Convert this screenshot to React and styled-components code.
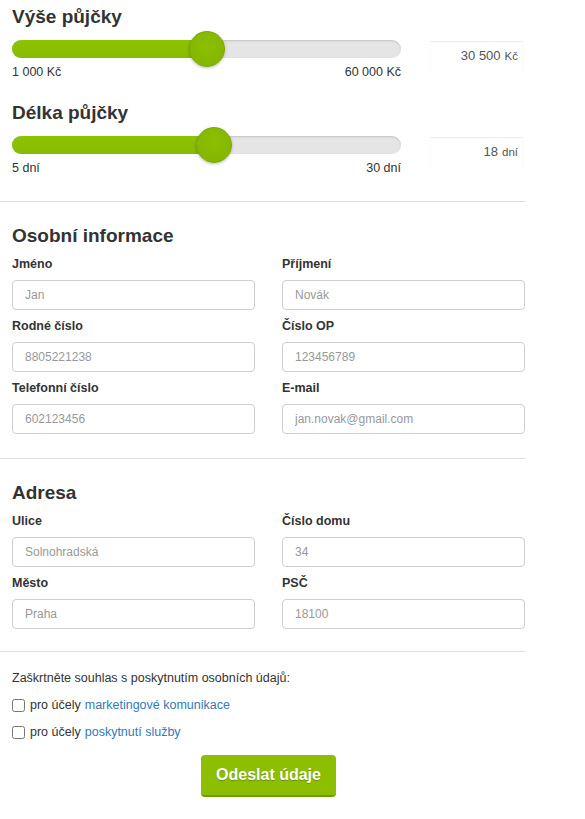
import React from "react";
import styled, { createGlobalStyle } from "styled-components";

const GlobalStyle = createGlobalStyle`
    body {
        margin: 0;
        background: #fff;
        font-family: "Liberation Sans", Arial, sans-serif;
        color: #333;
    }
    * {
        box-sizing: border-box;
    }
`;

const Page = styled.div`
    width: 525px;
`;

const Section = styled.section`
    padding: ${({ $top }) => $top}px 0 ${({ $bottom }) => $bottom}px 12px;
`;

const Divider = styled.hr`
    margin: 0;
    border: 0;
    border-top: 1px solid #dedede;
`;

const Title = styled.h2`
    margin: ${({ $gap }) => $gap || 0}px 0 0;
    font-size: 19px;
    line-height: 28px;
    font-weight: bold;
    color: #333;
`;

const SliderRow = styled.div`
    display: flex;
    gap: 29px;
    align-items: flex-start;
`;

const SliderCol = styled.div`
    width: 389px;
`;

const Track = styled.div`
    position: relative;
    height: 36px;
    &::before {
        content: "";
        position: absolute;
        left: 0;
        right: 0;
        top: 9px;
        height: 18px;
        border-radius: 9px;
        background: #e5e5e5;
        box-shadow: inset 0 1px 2px rgba(0, 0, 0, 0.15);
    }
`;

const Fill = styled.div`
    position: absolute;
    left: 0;
    top: 9px;
    height: 18px;
    border-radius: 9px 0 0 9px;
    background: linear-gradient(#8fc200, #87bb00);
`;

const Thumb = styled.div`
    position: absolute;
    top: 0;
    width: 36px;
    height: 36px;
    border-radius: 50%;
    background: radial-gradient(circle at 50% 40%, #8cbf00, #82b300);
    border: 1px solid #7aa800;
    box-shadow: 0 1px 3px rgba(0, 0, 0, 0.25);
`;

const RangeLabels = styled.div`
    display: flex;
    justify-content: space-between;
    margin-top: -1px;
    font-size: 12.5px;
    line-height: 12px;
    color: #333;
`;

const ValueBox = styled.div`
    width: 93px;
    height: 28px;
    margin-top: 10px;
    border-top: 1px solid #ececec;
    border-left: 1px solid #fafafa;
    border-right: 1px solid #fafafa;
    display: flex;
    align-items: center;
    justify-content: flex-end;
    padding-right: 4px;
    font-size: 13px;
    color: #555;
`;

const Unit = styled.span`
    font-size: 11.5px;
    margin-left: 4px;
`;

const FieldGrid = styled.div`
    display: grid;
    grid-template-columns: 243px 243px;
    column-gap: 27px;
    row-gap: 8px;
    margin-top: 6px;
`;

const Field = styled.label`
    display: flex;
    flex-direction: column;
    gap: 8px;
`;

const Label = styled.span`
    font-size: 12.5px;
    font-weight: bold;
    line-height: 16px;
    color: #333;
`;

const Input = styled.input`
    height: 30px;
    width: 100%;
    border: 1px solid #cfcfcf;
    border-radius: 4px;
    padding: 0 12px;
    font-family: "Liberation Sans", Arial, sans-serif;
    font-size: 12px;
    color: #555;
    &::placeholder {
        color: #999;
    }
`;

const ConsentText = styled.p`
    margin: 0;
    font-size: 12.5px;
    line-height: 16px;
    color: #333;
`;

const CheckList = styled.div`
    display: flex;
    flex-direction: column;
    gap: 9px;
    margin-top: 10px;
`;

const CheckRow = styled.label`
    display: flex;
    align-items: center;
    height: 18px;
    font-size: 12.5px;
    color: #333;
    input {
        width: 13px;
        height: 13px;
        margin: 0 5px 0 0;
    }
`;

const Link = styled.a`
    color: #337ab7;
    text-decoration: none;
    margin-left: 4px;
`;

const ButtonWrap = styled.div`
    display: flex;
    justify-content: center;
    margin-top: 14px;
`;

const SubmitBtn = styled.button`
    width: 135px;
    height: 42px;
    border: 0;
    border-bottom: 2px solid #6f9a00;
    border-radius: 4px;
    background: #8cbf00;
    color: #fff;
    font-family: "Liberation Sans", Arial, sans-serif;
    font-size: 16px;
    font-weight: bold;
    text-shadow: 0 1px 1px rgba(0, 0, 0, 0.25);
    cursor: pointer;
`;

const Slider = ({ title, min, max, value, minLabel, maxLabel, amount, unit, gap }) => {
    const ratio = (value - min) / (max - min);
    const left = ratio * (389 - 36);
    return (
        <>
            <Title $gap={gap}>{title}</Title>
            <SliderRow>
                <SliderCol>
                    <Track>
                        <Fill style={{ width: left + 18 }} />
                        <Thumb style={{ left }} />
                    </Track>
                    <RangeLabels>
                        <span>{minLabel}</span>
                        <span>{maxLabel}</span>
                    </RangeLabels>
                </SliderCol>
                <ValueBox>
                    {amount}
                    <Unit>{unit}</Unit>
                </ValueBox>
            </SliderRow>
        </>
    );
};

const personal = [
    ["Jméno", "Jan"],
    ["Příjmení", "Novák"],
    ["Rodné číslo", "8805221238"],
    ["Číslo OP", "123456789"],
    ["Telefonní číslo", "602123456"],
    ["E-mail", "jan.novak@gmail.com"],
];

const address = [
    ["Ulice", "Solnohradská"],
    ["Číslo domu", "34"],
    ["Město", "Praha"],
    ["PSČ", "18100"],
];

const Fields = ({ items }) => (
    <FieldGrid>
        {items.map(([label, ph]) => (
            <Field key={label}>
                <Label>{label}</Label>
                <Input placeholder={ph} />
            </Field>
        ))}
    </FieldGrid>
);

export default function App() {
    return (
        <Page>
            <GlobalStyle />
            <Section $top={3} $bottom={27}>
                <Slider
                    title="Výše půjčky"
                    min={1000}
                    max={60000}
                    value={30500}
                    minLabel="1 000 Kč"
                    maxLabel="60 000 Kč"
                    amount="30 500"
                    unit="Kč"
                />
                <Slider
                    title="Délka půjčky"
                    min={5}
                    max={30}
                    value={18}
                    minLabel="5 dní"
                    maxLabel="30 dní"
                    amount="18"
                    unit="dní"
                    gap={21}
                />
            </Section>
            <Divider />
            <Section $top={20} $bottom={24}>
                <Title>Osobní informace</Title>
                <Fields items={personal} />
            </Section>
            <Divider />
            <Section $top={20} $bottom={22}>
                <Title>Adresa</Title>
                <Fields items={address} />
            </Section>
            <Divider />
            <Section $top={18} $bottom={20}>
                <ConsentText>Zaškrtněte souhlas s poskytnutím osobních údajů:</ConsentText>
                <CheckList>
                    <CheckRow>
                        <input type="checkbox" />
                        pro účely<Link href="#">marketingové komunikace</Link>
                    </CheckRow>
                    <CheckRow>
                        <input type="checkbox" />
                        pro účely<Link href="#">poskytnutí služby</Link>
                    </CheckRow>
                </CheckList>
                <ButtonWrap>
                    <SubmitBtn>Odeslat údaje</SubmitBtn>
                </ButtonWrap>
            </Section>
        </Page>
    );
}
